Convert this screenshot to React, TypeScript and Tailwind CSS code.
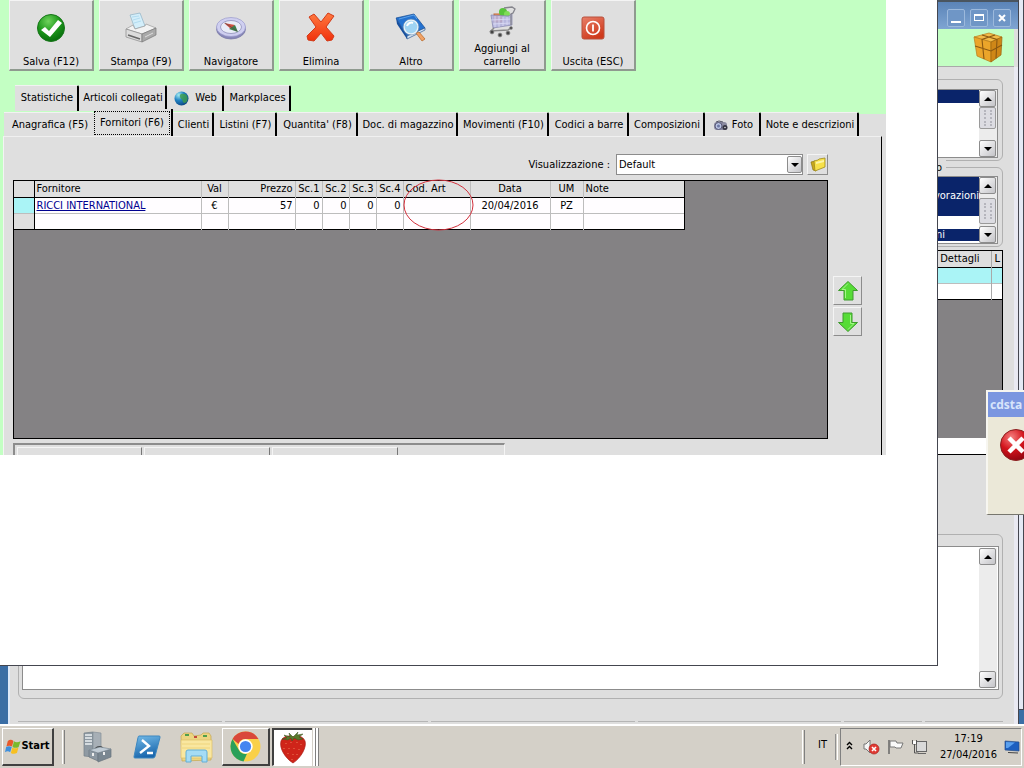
import type { ReactNode } from 'react'

interface ToolbarItem {
  label: string
  icon: ReactNode
  width: string
}

interface TabItem {
  label: string
  width: string
  icon?: ReactNode
}

function SaveIcon() {
  return (
    <svg width="30" height="30" viewBox="0 0 30 30">
      <defs>
        <radialGradient id="save" cx="0.4" cy="0.25" r="0.8">
          <stop offset="0" stopColor="#6fd35c" />
          <stop offset="0.5" stopColor="#1f9a1c" />
          <stop offset="1" stopColor="#04680a" />
        </radialGradient>
      </defs>
      <circle cx="15" cy="15" r="13.5" fill="url(#save)" stroke="#18761a" />
      <path d="M5 17l4-3 4 4L22 7l4 3L14 24z" fill="#fff" />
    </svg>
  )
}

function PrinterIcon() {
  return (
    <svg width="32" height="32" viewBox="0 0 32 32">
      <path d="M5 3l10-2 5 13-10 3z" fill="#d3eefa" stroke="#8fb2c4" strokeWidth="0.700" />
      <path d="M7 5l7-1M8 8l7-2M9 11l7-2" stroke="#b2dcf0" />
      <path d="M1 17l7-4 2 4 10-3 1-2 10 4-14 6z" fill="#f2f2f2" stroke="#999" strokeWidth="0.700" />
      <path d="M1 17l16 5v8L1 25z" fill="#dcdcdc" stroke="#888" strokeWidth="0.700" />
      <path d="M17 22l14-6v7l-14 7z" fill="#a9a9a9" stroke="#777" strokeWidth="0.700" />
      <path d="M3 23l12 4" stroke="#666" strokeWidth="1.500" />
      <path d="M20 25l8-4" stroke="#ddd" />
    </svg>
  )
}

function CompassIcon() {
  return (
    <svg width="32" height="26" viewBox="0 0 32 26">
      <ellipse cx="16" cy="14" rx="14.500" ry="10" fill="#8888b8" stroke="#7575a4" strokeWidth="0.700" />
      <ellipse cx="16" cy="12" rx="14.500" ry="9.500" fill="#cfcff0" stroke="#9a9acb" strokeWidth="0.700" />
      <ellipse cx="16" cy="12" rx="10.500" ry="6.500" fill="#e9edf8" stroke="#8585b0" strokeWidth="0.700" />
      <path d="M9 8l11 2-4 4z" fill="#d0503f" />
      <path d="M23 17l-9-3 6-4z" fill="#3e7d4a" />
      <path d="M10 8l12 8" stroke="#574a4a" strokeWidth="0.700" />
    </svg>
  )
}

function DeleteIcon() {
  return (
    <svg width="32" height="32" viewBox="0 0 32 32">
      <defs>
        <linearGradient id="del" x2="0" y2="1">
          <stop offset="0" stopColor="#ff7a40" />
          <stop offset="1" stopColor="#f0300c" />
        </linearGradient>
      </defs>
      <path d="M4 5l5-3 7 8 7-9 6 3-8 11 8 9-2 4-5 1-6-8-7 8-6-1-1-4 9-9z" fill="url(#del)" stroke="#d23a18" strokeLinejoin="round" />
    </svg>
  )
}

function BookSearchIcon() {
  return (
    <svg width="32" height="32" viewBox="0 0 32 32">
      <path d="M1 6l18-4 11 14-18 8z" fill="#2472d0" stroke="#134b93" strokeWidth="0.700" />
      <path d="M1 6l11 18v3L2 12z" fill="#164f9e" />
      <path d="M12 24l18-8v2l-18 9z" fill="#dbe8f5" stroke="#2a5792" strokeWidth="0.700" />
      <path d="M4 7l15-4 3 4" fill="none" stroke="#5da2e8" />
      <path d="M21 21l3-1 6 7-3 2z" fill="#f2a266" stroke="#b56320" strokeWidth="0.700" />
      <circle cx="16" cy="15" r="7" fill="#9fd4f3" stroke="#e8f2f8" strokeWidth="1.500" />
      <circle cx="16" cy="15" r="8" fill="none" stroke="#6a8aa8" strokeWidth="0.500" />
      <path d="M12 14c1-3 4-4 6-3" stroke="#fff" strokeWidth="2" fill="none" />
    </svg>
  )
}

function CartIcon() {
  return (
    <svg width="30" height="32" viewBox="0 0 30 32">
      <rect x="7" y="8" width="8" height="8" fill="#f3965e" stroke="#c46a34" />
      <circle cx="16" cy="6" r="4" fill="#58c43b" />
      <circle cx="20" cy="8" r="3" fill="#7fdc57" />
      <path d="M4 9l18 1 3-3v12L6 22z" fill="#b0b0de" fillOpacity="0.85" stroke="#8484ae" strokeWidth="0.700" />
      <path d="M8 10v11M12 10v11M16 11v9M20 11v8M4 14l20-1M6 18l18-1" stroke="#dcdcf5" strokeWidth="0.800" />
      <path d="M17 2l8-1 3 2-2 4-2 1v11" fill="none" stroke="#85858c" strokeWidth="1.300" />
      <path d="M7 22l-3 3 17-1 4-3" fill="none" stroke="#888" strokeWidth="1.500" />
      <g fill="#444" stroke="#999" strokeWidth="0.700">
        <circle cx="5" cy="26" r="2" />
        <circle cx="13" cy="29" r="2" />
        <circle cx="21" cy="27" r="2" />
        <circle cx="24" cy="22" r="1.500" />
      </g>
    </svg>
  )
}

function ExitIcon() {
  return (
    <svg width="24" height="24" viewBox="0 0 24 24">
      <defs>
        <linearGradient id="exit" x2="0.500" y2="1">
          <stop offset="0" stopColor="#e8806a" />
          <stop offset="1" stopColor="#cf3a1c" />
        </linearGradient>
      </defs>
      <rect x="1" y="1" width="22" height="22" rx="2" fill="url(#exit)" stroke="#b8503c" />
      <circle cx="12" cy="12" r="6.500" fill="none" stroke="#fff" strokeWidth="1.600" />
      <path d="M12 8.500v7" stroke="#fff" strokeWidth="1.800" />
    </svg>
  )
}

function GlobeIcon() {
  return (
    <svg width="15" height="15" viewBox="0 0 15 15">
      <defs>
        <radialGradient id="globe" cx="0.300" cy="0.250" r="0.850">
          <stop offset="0" stopColor="#a5ecf0" />
          <stop offset="0.450" stopColor="#2183c4" />
          <stop offset="1" stopColor="#093f7c" />
        </radialGradient>
      </defs>
      <circle cx="7.500" cy="7.500" r="7" fill="url(#globe)" />
      <path d="M7 3c3-1 6 0 6.500 3 .5 3-1 6-3 6S9 9 7.500 8 5 4 7 3z" fill="#3f9d4a" fillOpacity="0.8" />
    </svg>
  )
}

function CameraIcon() {
  return (
    <svg width="15" height="12" viewBox="0 0 15 12">
      <rect x="1" y="2" width="13" height="8" rx="3" fill="#8b8ba0" />
      <path d="M3 2l3-1 4 1" stroke="#555566" fill="none" />
      <circle cx="5.500" cy="6" r="3.500" fill="#b9c3e2" stroke="#5a5a78" />
      <circle cx="5.500" cy="6" r="1.500" fill="#6d77a2" />
      <circle cx="12" cy="7.500" r="2.500" fill="#333340" />
      <circle cx="12" cy="7.500" r="0.800" fill="#ddd" />
    </svg>
  )
}

function FolderIcon() {
  return (
    <svg width="16" height="16" viewBox="0 0 16 16">
      <path d="M1 5l4-1 1 10-3-1z" fill="#c9a91c" stroke="#8a7514" strokeWidth="0.700" />
      <path d="M4 4l4-1 1-1 6-1v9l-10 4z" fill="#f7e14a" stroke="#a08a1a" strokeWidth="0.800" />
      <path d="M6 5l8-2v2l-8 2z" fill="#fdf5a8" />
    </svg>
  )
}

function ArrowIcon({ down = false }: { down?: boolean }) {
  return (
    <svg width="22" height="20" viewBox="0 0 22 20" className={down ? 'rotate-180' : ''}>
      <path d="M11 0.500l9.500 9H16V19H7V9.500H1.500z" fill="#56dc36" stroke="#3f9a2e" />
      <path d="M11 2.500L5 8.500h3.500V17" fill="none" stroke="#a5f58a" />
    </svg>
  )
}

function PackageIcon() {
  return (
    <svg width="30" height="31" viewBox="0 0 30 31">
      <path d="M1 5L16 1l13 4-11 5z" fill="#f3bb48" stroke="#b87a18" strokeWidth="0.700" />
      <path d="M1 5l17 5v20L4 24z" fill="#eba52a" stroke="#b87a18" strokeWidth="0.700" />
      <path d="M18 10l11-5-1 18-10 7z" fill="#cf8717" stroke="#9a620c" strokeWidth="0.700" />
      <path d="M9 3l15 4.500-1 19M22 3L9 7.500l2 19.500M2 14l16 5 11-6" fill="none" stroke="#8a5812" strokeWidth="1.100" />
    </svg>
  )
}

function ErrorIcon() {
  return (
    <svg width="32" height="32" viewBox="0 0 32 32" className="shrink-0">
      <defs>
        <radialGradient id="err" cx="0.350" cy="0.250" r="0.800">
          <stop offset="0" stopColor="#f58080" />
          <stop offset="0.500" stopColor="#d3141c" />
          <stop offset="1" stopColor="#8d0410" />
        </radialGradient>
      </defs>
      <circle cx="16" cy="16" r="15.500" fill="url(#err)" stroke="#8a2020" />
      <path d="M9 9l14 14M23 9L9 23" stroke="#fff" strokeWidth="4.500" />
    </svg>
  )
}

function WindowsFlagIcon() {
  return (
    <svg width="16" height="16" viewBox="0 0 17 17" className="shrink-0">
      <path d="M3 2c2-1.500 4-1.500 6 0L7.500 8C5.500 6.800 3.500 6.800 1.500 8z" fill="#e8592a" />
      <path d="M9.500 2.500c2 1.200 4 1.200 7 0L14.500 8.500c-2 1.200-4.500 1.200-6.500 0z" fill="#7ab92c" />
      <path d="M1.200 8.500c2-1.200 4-1.200 6 0L5.500 14c-1.700-1.200-3.500-1.200-5.500 0z" fill="#3e8fdc" />
      <path d="M7.800 9c2 1.200 4 1.200 6.500 0L12.700 15c-2.200 1-4.500 1-6.500-.2z" fill="#f7c021" />
    </svg>
  )
}

function ServerIcon() {
  return (
    <svg width="29" height="32" viewBox="0 0 29 32">
      <path d="M1 2l9-1v25l-9-1z" fill="#8f9aa3" stroke="#747f88" strokeWidth="0.700" />
      <path d="M10 1l8 1v22l-8 2z" fill="#a7afb6" stroke="#858f98" strokeWidth="0.700" />
      <path d="M2 4h7M2 7h7M2 10h7M2 13h7" stroke="#edf1f4" strokeWidth="1.400" />
      <path d="M12 19c1-4 7-4 8-1" fill="none" stroke="#333" strokeWidth="1.500" />
      <path d="M6 19l9 3v8l-9-4z" fill="#8c98a2" stroke="#68747e" strokeWidth="0.700" />
      <path d="M15 22l13-4v8l-13 5z" fill="#7a8791" stroke="#68747e" strokeWidth="0.700" />
      <path d="M6 19l11-3 11 2-13 4z" fill="#c1ccd5" stroke="#7d8993" strokeWidth="0.700" />
      <path d="M10 22v3M21 21v3" stroke="#eee" strokeWidth="2" />
    </svg>
  )
}

function PowerShellIcon() {
  return (
    <svg width="28" height="24" viewBox="0 0 28 24">
      <defs>
        <linearGradient id="ps" x2="0.300" y2="1">
          <stop offset="0" stopColor="#74bbe8" />
          <stop offset="1" stopColor="#1a67ad" />
        </linearGradient>
      </defs>
      <path d="M6 1h20q1.500 0 1 1.500l-5 19q-.5 1.500-2 1.500H2q-1.500 0-1-1.500l4-19Q5.300 1 6 1z" fill="url(#ps)" stroke="#3d87bf" />
      <path d="M9 5l7 6-9 7M14 18h6" fill="none" stroke="#fff" strokeWidth="2.400" />
    </svg>
  )
}

function ExplorerIcon() {
  return (
    <svg width="33" height="32" viewBox="0 0 33 32">
      <path d="M1 5l3-3h8l2 3 7-1 2-2h6l2 3v24l-29 1z" fill="#ecd581" stroke="#c6a750" strokeWidth="0.700" />
      <path d="M5 4h4M23 5h4" stroke="#4f9f4d" strokeWidth="2" />
      <path d="M14 6h3" stroke="#c14a3d" strokeWidth="2" />
      <path d="M1 9h31v18H1z" fill="#f9e7a0" stroke="#dcbf66" strokeWidth="0.700" />
      <path d="M2 13h28M2 17h28" stroke="#efd57c" />
      <path d="M6 31V21q0-2 2-2h17q2 0 2 2v10h-5v-6H11v6z" fill="#a5dcf5" stroke="#62aed6" />
    </svg>
  )
}

function ChromeIcon() {
  return (
    <svg width="31" height="31" viewBox="0 0 31 31">
      <circle cx="15.500" cy="15.500" r="15" fill="#f9d048" />
      <path d="M2.500 8A15 15 0 0 1 28.500 8H15.500a7.500 7.500 0 0 0-7 5z" fill="#d9473a" />
      <path d="M2.500 8l6.500 11.200a7.500 7.500 0 0 0 8 3.600L13.500 30.400A15 15 0 0 1 2.500 8z" fill="#2ba05a" />
      <circle cx="15.500" cy="15.500" r="7.200" fill="#fff" />
      <circle cx="15.500" cy="15.500" r="5.600" fill="#4585f0" />
    </svg>
  )
}

function StrawberryIcon() {
  return (
    <svg width="28" height="33" viewBox="0 0 28 33">
      <path d="M14 6c4-2 10-1 12 4 2 6-4 17-12 22C6 27 0 17 2 10c2-5 8-6 12-4z" fill="#cf2419" stroke="#a81a12" strokeWidth="0.700" />
      <path d="M7 12v1M12 11v1M18 11v1M22 13v1M5 17v1M10 17v1M15 17v1M20 18v1M9 22v1M14 23v1M18 23v1M13 28v1" stroke="#ec7a58" />
      <path d="M14 6l-4-4 1 4-6-2 3 3-5 1 6 1 3-2 1 3 2-3 4 2 5-1-4-2 4-3-6 1 1-3z" fill="#577a2c" stroke="#3a5520" strokeWidth="0.500" />
    </svg>
  )
}

function SpeakerIcon() {
  return (
    <svg width="17" height="16" viewBox="0 0 17 16">
      <path d="M1 5h2l4-4v13l-4-4H1z" fill="#f5f5f5" stroke="#777" />
      <circle cx="11" cy="10" r="5" fill="#e13a33" stroke="#a8201d" strokeWidth="0.700" />
      <path d="M9 8l4 4M13 8l-4 4" stroke="#fff" strokeWidth="1.600" />
    </svg>
  )
}

function FlagIcon() {
  return (
    <svg width="17" height="16" viewBox="0 0 17 16">
      <path d="M2 1v14" stroke="#666" strokeWidth="1.500" />
      <path d="M3 2h6l1 2h6l-2 5H9L8 8H3z" fill="#fafafa" stroke="#777" />
    </svg>
  )
}

function NetworkIcon() {
  return (
    <svg width="17" height="16" viewBox="0 0 17 16">
      <rect x="5.500" y="2.500" width="10" height="10" fill="#d9d9d9" stroke="#666" />
      <path d="M7 14.500h8" stroke="#666" />
      <path d="M1.500 1v4h4V1M3.500 5v9h4" fill="none" stroke="#555" />
      <path d="M2 2h3v3H2z" fill="#fff" />
    </svg>
  )
}

function DesktopIcon() {
  return (
    <svg width="16" height="14" viewBox="0 0 16 14">
      <path d="M1 1l14 1v9L1 10z" fill="#1d5fc0" stroke="#2a4f88" strokeWidth="0.700" />
      <path d="M2 2l9 .5L4 8 2 8z" fill="#5aa0ee" />
      <path d="M4 12.500l10 .5" stroke="#444" />
    </svg>
  )
}

const toolbar: ToolbarItem[] = [
  { label: 'Salva (F12)', icon: <SaveIcon />, width: 'w-[85px]' },
  { label: 'Stampa (F9)', icon: <PrinterIcon />, width: 'w-[85px]' },
  { label: 'Navigatore', icon: <CompassIcon />, width: 'w-[85px]' },
  { label: 'Elimina', icon: <DeleteIcon />, width: 'w-[85px]' },
  { label: 'Altro', icon: <BookSearchIcon />, width: 'w-[85px]' },
  { label: 'Aggiungi al carrello', icon: <CartIcon />, width: 'w-[87px]' },
  { label: 'Uscita (ESC)', icon: <ExitIcon />, width: 'w-[85px]' }
]

const upperTabs: TabItem[] = [
  { label: 'Statistiche', width: 'w-16' },
  { label: 'Articoli collegati', width: 'w-[88px]' },
  { label: 'Web', width: 'w-[57px]', icon: <GlobeIcon /> },
  { label: 'Markplaces', width: 'w-[67px]' }
]

const lowerTabs: TabItem[] = [
  { label: 'Anagrafica (F5)', width: 'w-[90px]' },
  { label: 'Fornitori (F6)', width: 'w-[79px]' },
  { label: 'Clienti', width: 'w-[41px]' },
  { label: 'Listini (F7)', width: 'w-[63px]' },
  { label: "Quantita' (F8)", width: 'w-[81px]' },
  { label: 'Doc. di magazzino', width: 'w-[100px]' },
  { label: 'Movimenti (F10)', width: 'w-[91px]' },
  { label: 'Codici a barre', width: 'w-[80px]' },
  { label: 'Composizioni', width: 'w-[76px]' },
  { label: 'Foto', width: 'w-[56px]', icon: <CameraIcon /> },
  { label: 'Note e descrizioni', width: 'w-[98px]' }
]

const columns = [
  { label: 'Fornitore', width: 'w-[167px]', align: 'text-left', value: 'RICCI INTERNATIONAL' },
  { label: 'Val', width: 'w-[27px]', align: 'text-center', value: '€' },
  { label: 'Prezzo', width: 'w-[67px]', align: 'text-right', value: '57' },
  { label: 'Sc.1', width: 'w-[27px]', align: 'text-right', value: '0' },
  { label: 'Sc.2', width: 'w-[27px]', align: 'text-right', value: '0' },
  { label: 'Sc.3', width: 'w-[27px]', align: 'text-right', value: '0' },
  { label: 'Sc.4', width: 'w-[27px]', align: 'text-right', value: '0' },
  { label: 'Cod. Art', width: 'w-[67px]', align: 'text-left', value: '' },
  { label: 'Data', width: 'w-[80px]', align: 'text-center', value: '20/04/2016' },
  { label: 'UM', width: 'w-[33px]', align: 'text-center', value: 'PZ' },
  { label: 'Note', width: 'w-[101px]', align: 'text-left', value: '' }
]

function Triangle({ down = false }: { down?: boolean }) {
  return (
    <svg width="8" height="4" viewBox="0 0 8 4" className={down ? 'rotate-180' : ''}>
      <path d="M4 0l4 4H0z" fill="#000" />
    </svg>
  )
}

function ScrollBar({ thumb }: { thumb?: string }) {
  return (
    <div className="flex w-[18px] shrink-0 flex-col bg-[#ececec] pr-px">
      <button aria-label="Su" className="flex h-[17px] items-center justify-center rounded-xs border border-[#8c8c8c] bg-linear-to-br from-white to-[#c4c4c8]">
        <Triangle />
      </button>
      <div className="min-h-0 flex-1">
        {thumb && (
          <div className={`flex items-center justify-center rounded-xs border border-[#9a9a9a] bg-[#dcdce2] ${thumb}`}>
            <div className="h-4 w-2 border-x-2 border-dotted border-[#b5b5bd]" />
          </div>
        )}
      </div>
      <button aria-label="Giù" className="flex h-[17px] items-center justify-center rounded-xs border border-[#8c8c8c] bg-linear-to-br from-white to-[#c4c4c8]">
        <Triangle down />
      </button>
    </div>
  )
}

function BackgroundWindow() {
  return (
    <section className="absolute inset-y-0 left-2 right-[5px] flex flex-col overflow-hidden border-l-2 border-r border-l-[#dfe9f8] border-r-[#44464f] bg-[#dedede]">
      <header className="flex h-[29px] shrink-0 items-center justify-end gap-[5px] border-t-2 border-[#4a5560] bg-linear-to-b from-[#5b84b8] to-[#7fa5d2] pr-[7px] pt-1">
        <button aria-label="Riduci" className="flex size-[18px] items-end justify-center rounded-xs border border-[#9cb9dc] bg-[#6f96c6] pb-[3px]">
          <span className="h-[2px] w-[10px] bg-white" />
        </button>
        <button aria-label="Ingrandisci" className="flex size-[18px] items-center justify-center rounded-xs border border-[#9cb9dc] bg-[#6f96c6]">
          <span className="h-[7px] w-[10px] border border-t-2 border-white" />
        </button>
        <button aria-label="Chiudi" className="flex size-[18px] items-center justify-center rounded-xs border border-[#9cb9dc] bg-[#6f96c6]">
          <svg width="8" height="8" viewBox="0 0 8 8"><path d="M1 1l6 6M7 1L1 7" stroke="#fff" strokeWidth="2" /></svg>
        </button>
      </header>
      <div className="mr-1 flex h-[38px] shrink-0 items-center justify-end border-b border-[#a9a9a9] bg-[#c3ffc3] pr-[11px]">
        <PackageIcon />
      </div>

      <div className="flex min-h-0 flex-1 flex-col border-r-4 border-[#e9e9f2] pl-2 pr-[11px] pt-3">
        <div className="flex h-[82px] shrink-0 rounded-md border border-[#b0b0b0] px-1 pb-[2px] pt-[9px]">
          <div className="flex flex-1 border border-[#8c8c8c] bg-white">
            <div className="flex-1">
              <div className="h-[13px] bg-[#0a246a]" />
            </div>
            <ScrollBar thumb="h-[22px]" />
          </div>
        </div>

        <div className="relative mt-[6px] flex h-20 shrink-0 rounded-md border border-[#b0b0b0] px-1 pb-[2px] pt-2">
          <span className="absolute -top-2 right-[56px] bg-[#dedede] pr-1 leading-4">o</span>
          <div className="flex flex-1 border border-[#8c8c8c] bg-white">
            <ul className="flex-1 text-right text-white">
              <li className="flex h-[39px] items-center justify-end bg-[#0a246a]">vorazioni</li>
              <li className="h-[13px]" />
              <li className="h-3 bg-[#0a246a] pr-[34px] leading-3">ni</li>
            </ul>
            <ScrollBar thumb="mt-1 h-[26px]" />
          </div>
        </div>

        <div className="mt-[3px] flex h-[205px] shrink-0 flex-col border border-black bg-[#848284]">
          <table className="w-full table-fixed border-collapse">
            <thead>
              <tr className="h-4 border-b border-black bg-[#dedede]">
                <th className="border-r border-[#a9a9a9] p-0 pr-[11px] text-right font-normal leading-[15px]">Dettagli</th>
                <th className="w-[11px] p-0 pl-[3px] text-left font-normal leading-[15px]">L</th>
              </tr>
            </thead>
            <tbody>
              <tr className="h-4 border-b border-[#bdbdbd] bg-[#aaf4f6]"><td className="border-r border-[#a9a9a9]" /><td /></tr>
              <tr className="h-4 border-b border-black bg-white"><td className="border-r border-[#a9a9a9]" /><td /></tr>
            </tbody>
          </table>
          <div className="flex-1" />
          <div className="h-4 bg-white" />
        </div>

        <div className="mt-[79px] flex h-[165px] shrink-0 rounded-md border border-[#b0b0b0] px-[3px] pb-2 pt-[11px]">
          <div className="flex flex-1 border border-[#8c8c8c] bg-white p-px">
            <textarea aria-label="Note" className="flex-1 resize-none bg-white outline-none" />
            <ScrollBar />
          </div>
        </div>

        <div className="mt-[22px] flex shrink-0 gap-[3px]">
          <div className="h-1 flex-1 border-t border-[#b5b5b5]" />
          <div className="h-1 flex-1 border-t border-[#b5b5b5]" />
          <div className="h-1 flex-1 border-t border-[#b5b5b5]" />
          <div className="h-1 flex-1 border-t border-[#b5b5b5]" />
          <div className="h-1 w-[78px] border-t border-[#b5b5b5]" />
          <div className="h-1 w-[78px] border-t border-[#b5b5b5]" />
        </div>
      </div>
    </section>
  )
}

function Toolbar() {
  return (
    <div className="flex gap-[5px] pl-[9px]">
      {toolbar.map((item) => (
        <button
          key={item.label}
          className={`flex h-[71px] flex-col items-center border-b-2 border-l border-r-2 border-t border-b-[#8f9a8f] border-l-[#f4f4f4] border-r-[#8f9a8f] border-t-[#f4f4f4] bg-[#dfdfdf] px-2 pb-px ${item.width}`}
        >
          <span className="flex min-h-0 flex-1 items-center justify-center">{item.icon}</span>
          <span className="text-center leading-[13px]">{item.label}</span>
        </button>
      ))}
    </div>
  )
}

function SupplierTable() {
  return (
    <div className="relative w-[670px] max-w-full">
      <table className="w-full table-fixed border-collapse border-b border-black">
        <thead>
          <tr className="h-4 border-b border-black bg-[#dfdfdf]">
            <th className="w-5 border-r border-black p-0" />
            {columns.map((c) => (
              <th key={c.label} className={`whitespace-nowrap border-r border-[#bdbdbd] px-[2px] py-0 font-normal leading-[15px] last:border-black ${c.width} ${c.align}`}>
                {c.label}
              </th>
            ))}
          </tr>
        </thead>
        <tbody>
          <tr className="h-4 border-b border-[#bdbdbd] bg-[#fffdff]">
            <td className="border-r border-black bg-[#aaf4f6] p-0" />
            {columns.map((c, i) => (
              <td key={c.label} className={`whitespace-nowrap border-r border-[#bdbdbd] px-[2px] py-0 leading-[15px] last:border-r-black ${c.align}`}>
                {i === 0 ? <a href="#" className="text-[#000090] underline">{c.value}</a> : c.value}
              </td>
            ))}
          </tr>
          <tr className="h-4 border-b border-black bg-[#fffdff]">
            <td className="border-r border-black bg-[#dfdfdf] p-0" />
            {columns.map((c) => (
              <td key={c.label} className="border-r border-[#bdbdbd] p-0 last:border-r-black" />
            ))}
          </tr>
        </tbody>
      </table>
      <svg width="71" height="52" viewBox="0 0 71 52" className="absolute -top-[2px] left-[389px]">
        <ellipse cx="35.500" cy="26" rx="34.500" ry="25" fill="none" stroke="#d2303c" />
      </svg>
    </div>
  )
}

function ArticlePanel() {
  return (
    <div className="mr-[51px] flex h-[455px] flex-col overflow-hidden bg-[#c3ffc3]">
      <Toolbar />

      <div className="mt-[14px] flex pl-[15px]" role="tablist">
        {upperTabs.map((tab) => (
          <button
            key={tab.label}
            role="tab"
            className={`flex h-[26px] items-center justify-center gap-[6px] whitespace-nowrap rounded-tr-xs border-r-2 border-t border-r-black border-t-[#f2f2f2] bg-[#dfdfdf] pl-[2px] ${tab.width}`}
          >
            {tab.icon}
            {tab.label}
          </button>
        ))}
      </div>

      <div className="flex h-[25px] items-end pl-1" role="tablist">
        {lowerTabs.map((tab, i) =>
          i === 1 ? (
            <button key={tab.label} role="tab" aria-selected className={`z-10 h-[27px] shrink-0 border-r-2 border-black bg-[#dfdfdf] pr-px pt-px ${tab.width}`}>
              <span className="flex h-6 items-center justify-center whitespace-nowrap border border-dotted border-black">{tab.label}</span>
            </button>
          ) : (
            <button
              key={tab.label}
              role="tab"
              className={`flex h-6 shrink-0 items-center justify-center gap-1 whitespace-nowrap rounded-tr-xs border-t border-t-[#f2f2f2] bg-[#dfdfdf] pl-[2px] pt-[2px] ${i === 0 ? '' : 'border-r-2 border-r-black'} ${tab.width}`}
            >
              {tab.icon}
              {tab.label}
            </button>
          )
        )}
        <div className="h-[22px] flex-1 bg-[#dfdfdf]" />
      </div>

      <div className="ml-[3px] flex-1 bg-[#dfdfdf] pr-1">
        <div className="flex h-full gap-[5px] border-l border-r border-t border-l-[#f4f4f4] border-r-black border-t-[#f0f0f0] pl-[9px] pr-[19px]">
          <div className="flex min-w-0 flex-1 flex-col pt-[17px]">
            <div className="flex h-[21px] items-center justify-end">
              <label htmlFor="view" className="mr-[6px] pt-[2px]">Visualizzazione :</label>
              <div className="relative mr-1 w-[187px]">
                <select id="view" className="h-[21px] w-full appearance-none border border-[#8c8c8c] bg-white pl-[2px] pt-[2px] outline-none">
                  <option>Default</option>
                </select>
                <span className="pointer-events-none absolute right-px top-[2px] flex h-[17px] w-[15px] items-center justify-center rounded-xs border border-[#8c8c8c] bg-linear-to-br from-white to-[#c4c4c8]">
                  <Triangle down />
                </span>
              </div>
              <button aria-label="Apri visualizzazione" className="flex size-[21px] items-center justify-center border border-b-[#8c8c8c] border-l-[#f4f4f4] border-r-[#8c8c8c] border-t-[#f4f4f4]">
                <FolderIcon />
              </button>
            </div>
            <div className="mt-[5px] h-[259px] shrink-0 border border-black bg-[#848284]">
              <SupplierTable />
            </div>
            <div className="mr-[323px] mt-1 flex flex-1 gap-[2px] border-l-2 border-r border-t-2 border-l-[#8c8c8c] border-r-[#f4f4f4] border-t-[#8c8c8c] pl-[2px] pt-[2px]">
              <div className="w-[125px] border-l border-r border-t border-l-[#f4f4f4] border-r-[#777] border-t-[#f4f4f4]" />
              <div className="w-[126px] border-l border-r border-t border-l-[#f4f4f4] border-r-[#777] border-t-[#f4f4f4]" />
              <div className="w-[126px] border-l border-r border-t border-l-[#f4f4f4] border-r-[#777] border-t-[#f4f4f4]" />
            </div>
          </div>
          <div className="flex flex-col gap-[2px] pt-[139px]">
            <button aria-label="Sposta su" className="flex size-[29px] items-center justify-center border border-b-[#8c8c8c] border-l-[#f4f4f4] border-r-[#8c8c8c] border-t-[#f4f4f4]">
              <ArrowIcon />
            </button>
            <button aria-label="Sposta giù" className="flex size-[29px] items-center justify-center border border-b-[#8c8c8c] border-l-[#f4f4f4] border-r-[#8c8c8c] border-t-[#f4f4f4]">
              <ArrowIcon down />
            </button>
          </div>
        </div>
      </div>
    </div>
  )
}

function ErrorDialog() {
  return (
    <section role="alertdialog" aria-label="cdsta" className="absolute right-0 top-[390px] h-[125px] w-[38px] overflow-hidden border-b border-l-2 border-t-2 border-b-[#77766e] border-l-[#f7f6f0] border-t-[#f7f6f0] bg-[#ebe8d8]">
      <h2 className="flex h-[25px] items-center bg-[#7b96e0] pl-[2px] font-['Noto_Sans',sans-serif] text-xs font-bold text-[#d7e4fb]">cdsta</h2>
      <div className="flex pl-3 pt-3">
        <ErrorIcon />
      </div>
    </section>
  )
}

function Taskbar() {
  return (
    <footer className="flex h-11 shrink-0 items-center border-t-2 border-white bg-[#d4d0c8] px-[2px]">
      <button className="flex h-[38px] w-[52px] items-center justify-center border-b-2 border-l border-r-2 border-t border-b-[#404040] border-l-white border-r-[#404040] border-t-white text-[11px] font-bold">
        <WindowsFlagIcon />
        Start
      </button>
      <div className="ml-2 h-[34px] w-[3px] border-l border-r border-l-white border-r-[#808080]" />
      <button aria-label="Server Manager" className="ml-[18px] w-[29px]"><ServerIcon /></button>
      <button aria-label="PowerShell" className="ml-[21px]"><PowerShellIcon /></button>
      <button aria-label="Esplora risorse" className="ml-[19px]"><ExplorerIcon /></button>
      <button aria-label="Chrome" className="ml-[9px] flex h-[38px] w-12 items-center justify-center border-b-2 border-l border-r-2 border-t border-b-[#404040] border-l-white border-r-[#404040] border-t-white">
        <ChromeIcon />
      </button>
      <button aria-label="Gestionale" className="ml-[2px] flex h-[38px] w-10 items-center justify-center border-b border-l-2 border-t-2 border-b-white border-l-[#404040] border-t-[#404040] bg-white">
        <StrawberryIcon />
      </button>
      <div className="ml-px h-[38px] w-[3px] border-l-2 border-r border-l-white border-r-[#808080]" />
      <div className="h-[38px] w-[3px] border-l-2 border-r border-l-white border-r-[#808080]" />

      <div className="ml-auto h-[34px] w-[3px] border-l border-r border-l-white border-r-[#808080]" />
      <span className="mb-1 ml-[13px] w-[17px]">IT</span>
      <div className="h-[26px] w-[3px] border-l border-r border-l-[#909090] border-r-white" />
      <div className="ml-[2px] flex h-[38px] w-[182px] items-center border border-b-white border-l-[#808080] border-r-white border-t-[#808080] pl-[5px]">
        <button aria-label="Mostra icone nascoste" className="mb-1 w-2">
          <svg width="7" height="9" viewBox="0 0 7 9"><path d="M1 4l2.500-2.500L6 4M1 8l2.500-2.500L6 8" fill="none" stroke="#000" strokeWidth="1.400" /></svg>
        </button>
        <div className="ml-[9px] flex gap-[7px]">
          <SpeakerIcon />
          <FlagIcon />
          <NetworkIcon />
        </div>
        <time className="ml-auto text-center leading-4">
          <span className="block">17:19</span>
          <span className="block">27/04/2016</span>
        </time>
        <button aria-label="Mostra desktop" className="ml-[7px] mr-px"><DesktopIcon /></button>
      </div>
    </footer>
  )
}

export default function App() {
  return (
    <div className="flex h-screen flex-col overflow-hidden bg-[#3b6ea5] font-['DejaVu_Sans_Condensed','DejaVu_Sans',sans-serif] text-[11px] text-black">
      <main className="relative min-h-0 flex-1 overflow-hidden">
        {/* bordo della finestra più indietro */}
        <div className="absolute bottom-[14px] right-0 top-0 w-[5px] border-b border-r border-[#44464f] bg-[#e4e9f4]" />
        <BackgroundWindow />
        <section className="absolute bottom-[58px] left-0 right-[86px] top-0 border-b border-r border-[#44464f] bg-white">
          <ArticlePanel />
        </section>
        <ErrorDialog />
      </main>
      <Taskbar />
    </div>
  )
}
